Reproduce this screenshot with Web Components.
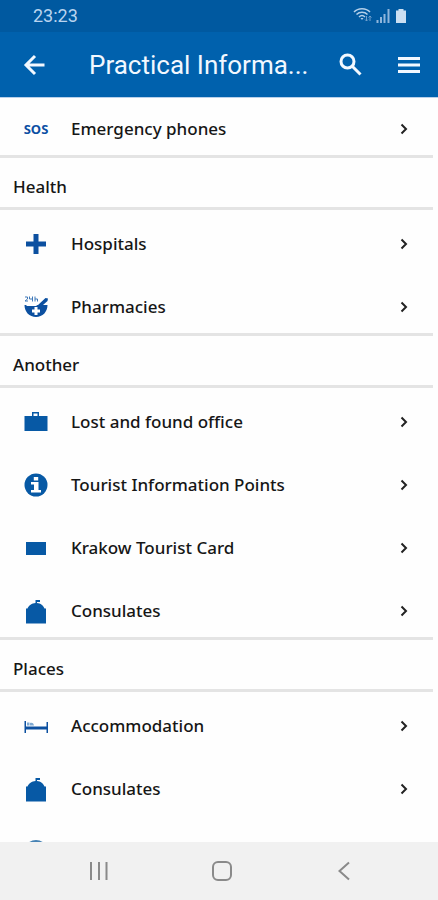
<!DOCTYPE html>
<html lang="en">
<head>
<meta charset="utf-8">
<meta name="viewport" content="width=device-width, initial-scale=1">
<title>Practical Information</title>
<style>
html, body { height: 100%; margin: 0; }
body { background: #fefefe; color: #161616; font-family: "Noto Sans", "Open Sans", sans-serif; }
</style>
</head>
<body>
<info-app></info-app>
<script>
const ICONS = {
  cross: '<path fill="#0c50a0" d="M9.500 2h5v7.500h7.500v5h-7.500v7.500h-5v-7.500H2v-5h7.500z"/>',
  pharmacy: '<g fill="none" stroke="#3f78b8" stroke-width="1"><path d="M1 2h2.500v2L1 6h3M5.500 1.500V4h3M8.500 1.500V6.500M11 1.500v5M11 4h2.500v2.500"/></g><path fill="#0c50a0" d="M.5 10H14l7.500-7 2.500.5-.5 2.500-4.500 4h4.500c0 7-5 12-11.500 12S.5 17 .5 10z"/><path fill="#fff" d="M10.500 12h3v2.500H16v3h-2.500V20h-3v-2.500H8v-3h2.500zM2 10h10l1.500 1H3z"/>',
  bag: '<path fill="#0759a5" d="M.5 6H8V2h7v4h8.500v15H.5zM9.500 3.500V6h4V3.500z" fill-rule="evenodd"/>',
  info: '<circle cx="12" cy="12" r="11.500" fill="#0759a5"/><path fill="#fff" d="M9.800 4h4.400v3.500H9.800zM7 9h7.500v8H17v2.500H7V17h3v-5.500H7z"/>',
  card: '<path fill="#0759a5" d="M2 6h20v13H2z"/>',
  dome: '<path fill="#0759a5" d="M11.500 4V1h4.500v2h-3v1c3.500.2 6.500 2.500 7.500 5.500H22v15H2v-15h1.500C4.500 6.500 8 4.200 11.500 4z"/>',
  bed: '<path fill="#0c50a0" d="M.5 7H2v5.500h20.500V8H24v11h-1.500v-3.500H2V19H.5z"/><path fill="#7fa9d2" d="M3 8.500h2.500v3H3zM6 9c2-.5 3.500 0 4 2.500H6z"/>',
  disc: '<circle cx="12" cy="12" r="12" fill="#4682b4"/>'
};

const define = (name, template, setup) => customElements.define(name, class extends HTMLElement {
  connectedCallback() {
    if (this.shadowRoot) return;
    this.attachShadow({ mode: 'open' }).innerHTML = template;
    if (setup) setup(this, this.shadowRoot);
  }
});

define('status-bar', `
<style>
:host { display: flex; justify-content: space-between; align-items: center; height: 32px; padding: 0 31px 0 33px;
  background: #0059a0; color: #b9d4ef; font: 18px/32px Roboto, sans-serif; box-sizing: border-box; }
svg { display: block; }
</style>
<time>23:23</time>
<svg width="54" height="18" viewBox="0 0 54 18" fill="none" stroke="#b3cfe9" aria-hidden="true">
  <path stroke-width="1.500" d="M1 5C5 .5 13 .5 17 5M3.500 7.500c3-3 8-3 11 0M6 10c2-2 4-2 6 0"/>
  <path fill="#b3cfe9" stroke="none" d="M7.500 11h3L9 13z"/>
  <path stroke="#6f9fcd" d="M13.500 9v5M12 12.500l1.500 1.500 1.500-1.500M17 14V9M15.500 10.500L17 9l1.500 1.500"/>
  <path stroke-width="2" stroke="#8fb6dc" d="M24.500 16v-3M28 16v-6M31.500 16V7M35.500 16V2"/>
  <path fill="#cbdff2" stroke="none" d="M45.500 2h5v1.500H53V16H43V3.500h2.500z"/>
</svg>`);

define('app-bar', `
<style>
:host { display: flex; align-items: center; height: 66px; padding: 0 13px 0 19px; background: #0061ad; color: #f2f8ff;
  border-bottom: 1px solid #b8d0ea; box-sizing: border-box; }
button { display: grid; place-items: center; flex: none; width: 32px; height: 48px; padding: 0; border: 0; background: none; color: inherit; }
h1 { flex: 1; min-width: 0; margin: 0 0 0 38px; font: 26px/32px Roboto, sans-serif; white-space: nowrap; overflow: hidden; }
.menu { margin-left: 27px; }
svg { display: block; fill: none; stroke: currentColor; stroke-width: 3; }
</style>
<button aria-label="Back"><svg width="24" height="24" viewBox="0 0 24 24"><path d="M21.500 12H4M12 3l-9 9 9 9"/></svg></button>
<h1><slot></slot></h1>
<button aria-label="Search"><svg width="24" height="24" viewBox="0 0 24 24"><circle cx="9.500" cy="8.500" r="6.500"/><path d="M14 13l8.500 8.500"/></svg></button>
<button class="menu" aria-label="Menu"><svg width="24" height="24" viewBox="0 0 24 24"><path d="M1 5.500h22M1 12h22M1 18.500h22"/></svg></button>`);

define('info-row', `
<style>
:host { display: block; }
a { display: flex; align-items: center; height: 60px; padding: 8px 26px 0 23px; box-sizing: border-box;
  color: inherit; text-decoration: none; font-size: 17px; line-height: 24px; font-weight: 500; }
.icon { display: grid; place-items: center; flex: none; width: 26px; margin-right: 22px; }
.icon span { color: #0c4fa3; font-size: 13px; line-height: 16px; font-weight: 700; }
.label { flex: 1; }
svg { display: block; overflow: visible; }
</style>
<a href="#"><span class="icon"></span><span class="label"><slot></slot></span><svg class="go" width="16" height="16" viewBox="0 0 16 16" fill="none" stroke="#222" stroke-width="2" aria-hidden="true"><path d="M5.500 3.500L10 8l-4.500 4.500"/></svg></a>`,
(host, root) => {
  const name = host.getAttribute('icon');
  root.querySelector('.icon').innerHTML = name === 'sos' ? '<span>SOS</span>'
    : `<svg width="24" height="24" viewBox="0 0 24 24" aria-hidden="true">${ICONS[name]}</svg>`;
});

define('info-group', `
<style>
:host { display: block; }
h2 { margin: 0 5px 0 0; padding: 8px 13px 0; height: 55px; box-sizing: border-box; line-height: 41px;
  font-size: 17px; font-weight: 500; border: solid #e4e4e4; border-width: 3px 0; }
.rows { display: grid; gap: 3px; }
</style>
<h2></h2><div class="rows"><slot></slot></div>`,
(host, root) => {
  const title = root.querySelector('h2');
  if (host.getAttribute('heading')) title.textContent = host.getAttribute('heading');
  else title.remove();
});

define('system-nav', `
<style>
:host { display: flex; justify-content: space-between; align-items: center; height: 58px; padding: 0 78px 0 83px; background: #f1f1f1; box-sizing: border-box; }
button { display: grid; place-items: center; width: 32px; height: 40px; padding: 0; border: 0; background: none; }
svg { display: block; fill: none; stroke: #8a8a8a; stroke-width: 2; }
</style>
<button aria-label="Recent apps"><svg width="20" height="20" viewBox="0 0 20 20"><path d="M2 1v18M10 1v18M17.500 1v18"/></svg></button>
<button aria-label="Home"><svg width="20" height="20" viewBox="0 0 20 20"><rect x="1" y="1" width="18" height="18" rx="5"/></svg></button>
<button aria-label="Back"><svg width="20" height="20" viewBox="0 0 20 20"><path d="M15 1.500L5.500 10l9.500 8.500"/></svg></button>`);

define('info-app', `
<style>
:host { display: flex; flex-direction: column; height: 100vh; overflow: hidden; }
status-bar, app-bar, system-nav { flex: none; }
app-bar { z-index: 1; }
main { flex: 1; min-height: 0; margin-top: -3px; overflow: hidden; }
</style>
<status-bar></status-bar>
<app-bar>Practical Informa...</app-bar>
<main>
  <info-group><info-row icon="sos">Emergency phones</info-row></info-group>
  <info-group heading="Health">
    <info-row icon="cross">Hospitals</info-row>
    <info-row icon="pharmacy">Pharmacies</info-row>
  </info-group>
  <info-group heading="Another">
    <info-row icon="bag">Lost and found office</info-row>
    <info-row icon="info">Tourist Information Points</info-row>
    <info-row icon="card">Krakow Tourist Card</info-row>
    <info-row icon="dome">Consulates</info-row>
  </info-group>
  <info-group heading="Places">
    <info-row icon="bed">Accommodation</info-row>
    <info-row icon="dome">Consulates</info-row>
    <info-row icon="disc"></info-row>
  </info-group>
</main>
<system-nav></system-nav>`);
</script>
</body>
</html>
